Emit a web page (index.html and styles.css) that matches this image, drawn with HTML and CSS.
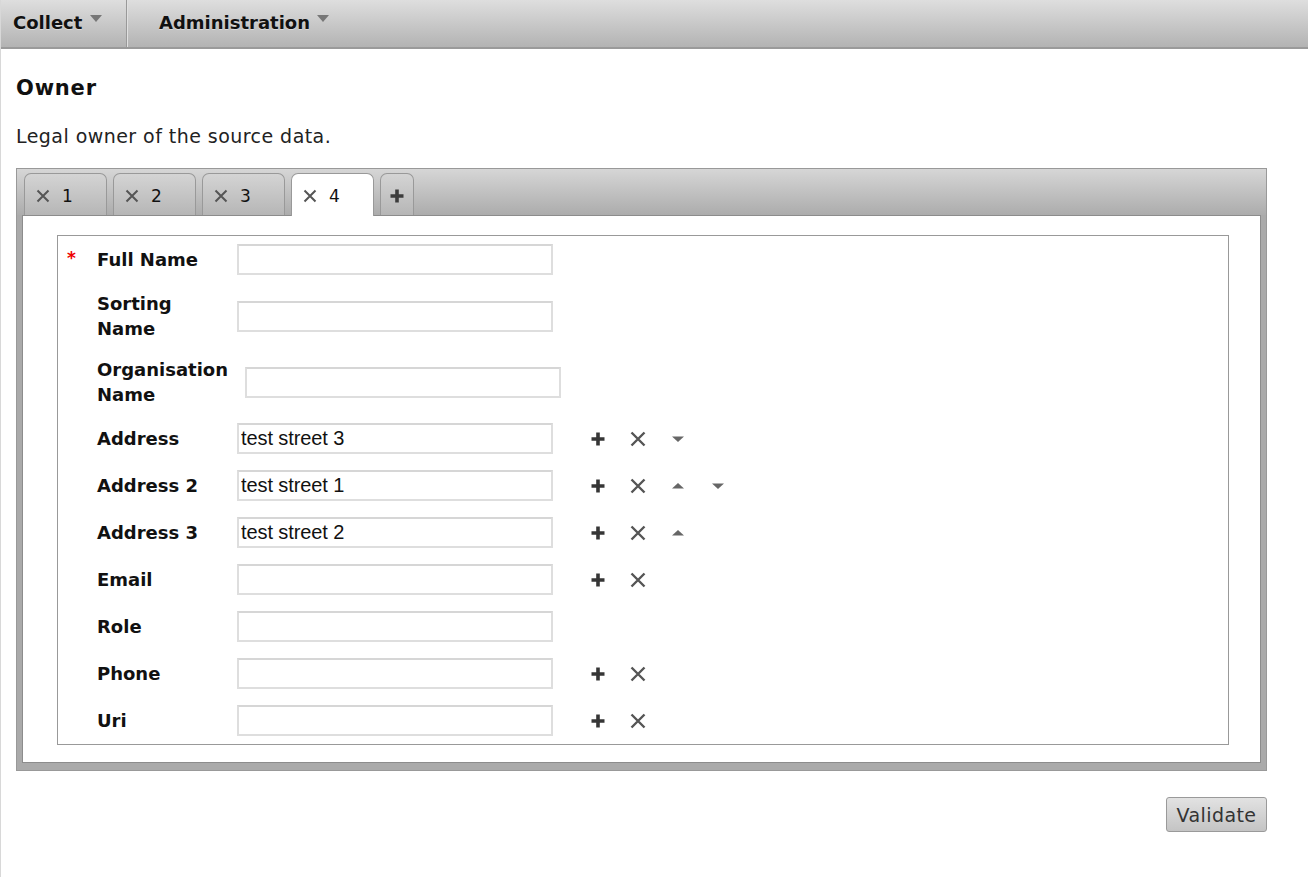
FILE: index.html
```html
<!DOCTYPE html>
<html>
<head>
<meta charset="utf-8">
<link rel="stylesheet" href="styles.css">
</head>
<body>
<div class="topbar">
  <div class="menu first">Collect <span class="caret"></span></div>
  <div class="menu">Administration <span class="caret"></span></div>
</div>
<div class="page">
  <h2 class="title">Owner</h2>
  <p class="desc">Legal owner of the source data.</p>

  <div class="tabpanel">
    <div class="tabs">
      <div class="tab"><svg class="tx" viewBox="0 0 14 14"><path d="M1.5 1.5L12.5 12.5M12.5 1.5L1.5 12.5"/></svg>1</div>
      <div class="tab"><svg class="tx" viewBox="0 0 14 14"><path d="M1.5 1.5L12.5 12.5M12.5 1.5L1.5 12.5"/></svg>2</div>
      <div class="tab"><svg class="tx" viewBox="0 0 14 14"><path d="M1.5 1.5L12.5 12.5M12.5 1.5L1.5 12.5"/></svg>3</div>
      <div class="tab active"><svg class="tx" viewBox="0 0 14 14"><path d="M1.5 1.5L12.5 12.5M12.5 1.5L1.5 12.5"/></svg>4</div>
      <div class="tab add"><svg class="plus" viewBox="0 0 16 16"><path d="M8 1.5V14.5M1.5 8H14.5"/></svg></div>
    </div>
    <div class="content">
      <div class="form">
        <div class="row"><span class="req">*</span><label>Full Name</label><input type="text"></div>
        <div class="row"><label>Sorting Name</label><input type="text"></div>
        <div class="row"><label>Organisation Name</label><input type="text"></div>
        <div class="row"><label>Address</label><input type="text" value="test street 3">
          <div class="acts">
            <svg class="ic plus" viewBox="0 0 16 16"><path d="M8 1.5V14.5M1.5 8H14.5"/></svg>
            <svg class="ic x" viewBox="0 0 16 16"><path d="M1.5 1.5L14.5 14.5M14.5 1.5L1.5 14.5"/></svg>
            <svg class="ic tri" viewBox="0 0 16 16"><path d="M2 5.5H14L8 11Z"/></svg>
          </div>
        </div>
        <div class="row"><label>Address 2</label><input type="text" value="test street 1">
          <div class="acts">
            <svg class="ic plus" viewBox="0 0 16 16"><path d="M8 1.5V14.5M1.5 8H14.5"/></svg>
            <svg class="ic x" viewBox="0 0 16 16"><path d="M1.5 1.5L14.5 14.5M14.5 1.5L1.5 14.5"/></svg>
            <svg class="ic tri" viewBox="0 0 16 16"><path d="M2 10.5H14L8 5Z"/></svg>
            <svg class="ic tri" viewBox="0 0 16 16"><path d="M2 5.5H14L8 11Z"/></svg>
          </div>
        </div>
        <div class="row"><label>Address 3</label><input type="text" value="test street 2">
          <div class="acts">
            <svg class="ic plus" viewBox="0 0 16 16"><path d="M8 1.5V14.5M1.5 8H14.5"/></svg>
            <svg class="ic x" viewBox="0 0 16 16"><path d="M1.5 1.5L14.5 14.5M14.5 1.5L1.5 14.5"/></svg>
            <svg class="ic tri" viewBox="0 0 16 16"><path d="M2 10.5H14L8 5Z"/></svg>
          </div>
        </div>
        <div class="row"><label>Email</label><input type="text">
          <div class="acts">
            <svg class="ic plus" viewBox="0 0 16 16"><path d="M8 1.5V14.5M1.5 8H14.5"/></svg>
            <svg class="ic x" viewBox="0 0 16 16"><path d="M1.5 1.5L14.5 14.5M14.5 1.5L1.5 14.5"/></svg>
          </div>
        </div>
        <div class="row"><label>Role</label><input type="text"></div>
        <div class="row"><label>Phone</label><input type="text">
          <div class="acts">
            <svg class="ic plus" viewBox="0 0 16 16"><path d="M8 1.5V14.5M1.5 8H14.5"/></svg>
            <svg class="ic x" viewBox="0 0 16 16"><path d="M1.5 1.5L14.5 14.5M14.5 1.5L1.5 14.5"/></svg>
          </div>
        </div>
        <div class="row"><label>Uri</label><input type="text">
          <div class="acts">
            <svg class="ic plus" viewBox="0 0 16 16"><path d="M8 1.5V14.5M1.5 8H14.5"/></svg>
            <svg class="ic x" viewBox="0 0 16 16"><path d="M1.5 1.5L14.5 14.5M14.5 1.5L1.5 14.5"/></svg>
          </div>
        </div>
      </div>
    </div>
  </div>
  <div class="footer"><button class="btn">Validate</button></div>
</div>
</body>
</html>
```

FILE: styles.css
```css
html, body {
  margin: 0;
  padding: 0;
  background: #fff;
}
body {
  font-family: "DejaVu Sans", Verdana, sans-serif;
  color: #111;
  border-left: 1px solid #d8d8d8;
  min-height: 877px;
  box-sizing: border-box;
}
.topbar {
  height: 47px;
  display: flex;
  align-items: stretch;
  background: linear-gradient(#dedede, #b3b3b3);
  border-bottom: 2px solid #9a9a9a;
}
.menu {
  font-weight: bold;
  font-size: 18px;
  line-height: 22px;
  padding: 12px 0 0 12px;
  box-sizing: border-box;
  text-shadow: 0 1px 0 rgba(255,255,255,0.4);
}
.menu.first {
  width: 126px;
  border-right: 1px solid #999;
  box-shadow: 1px 0 0 #e0e0e0;
}
.menu + .menu {
  padding-left: 32px;
}
.caret {
  display: inline-block;
  width: 0;
  height: 0;
  border-left: 6px solid transparent;
  border-right: 6px solid transparent;
  border-top: 7px solid #777;
  vertical-align: top;
  margin-top: 3px;
  margin-left: 1px;
}
.page {
  padding: 0 41px 0 15px;
}
.title {
  font-size: 21px;
  letter-spacing: 0.8px;
  font-weight: bold;
  margin: 28px 0 0;
  line-height: 22px;
}
.desc {
  font-size: 19px;
  letter-spacing: 0.45px;
  margin: 26px 0 0;
  line-height: 22px;
  color: #222;
}
.tabpanel {
  margin-top: 21px;
  border: 1px solid #999;
  background: linear-gradient(#d6d6d6 0px, #acacac 46px, #aaaaaa 46px);
  padding: 4px 5px 7px 5px;
}
.tabs {
  display: flex;
  gap: 6px;
  padding-left: 2px;
  position: relative;
  z-index: 1;
}
.tab {
  width: 83px;
  height: 42px;
  box-sizing: border-box;
  border: 1px solid #999;
  border-bottom: none;
  border-radius: 7px 7px 0 0;
  background: linear-gradient(#d4d4d4, #b6b6b6);
  display: flex;
  align-items: center;
  padding: 2px 0 0 11px;
  font-size: 17px;
  color: #111;
}
.tab .tx {
  width: 14px;
  height: 14px;
  margin-right: 12px;
  fill: none;
  stroke: #555;
  stroke-width: 2;
}
.tab.active {
  background: #fff;
  height: 43px;
  margin-bottom: -1px;
}
.tab.add {
  width: 34px;
  padding: 2px 0 0 0;
  justify-content: center;
}
.tab.add .plus {
  width: 16px;
  height: 16px;
  fill: none;
  stroke: #3c3c3c;
  stroke-width: 3.6;
}
.content {
  background: #fff;
  border: 1px solid #8c8c8c;
  padding: 19px 31px 17px 34px;
}
.form {
  border: 1px solid #999;
  padding: 8px 0 8px 0;
  display: flex;
  flex-direction: column;
  gap: 16px;
}
.row {
  display: flex;
  align-items: center;
  position: relative;
  padding-left: 39px;
}
.req {
  position: absolute;
  left: 9px;
  top: 4px;
  color: #e00;
  font-size: 17px;
  font-weight: bold;
}
label {
  font-weight: bold;
  font-size: 18px;
  line-height: 25px;
  width: 123px;
  min-width: min-content;
  margin-right: 17px;
  flex: 0 0 auto;
}
input {
  width: 316px;
  height: 31px;
  box-sizing: border-box;
  border: 2px solid #dedede;
  border-top-color: #d6d6d6;
  padding: 0 2px;
  font-family: "Liberation Sans", Arial, sans-serif;
  font-size: 20px;
  letter-spacing: -0.1px;
  color: #111;
  margin: 0;
  background: #fff;
}
.acts {
  display: flex;
  gap: 24px;
  margin-left: 37px;
}
.ic {
  width: 16px;
  height: 16px;
  display: block;
}
.ic.plus {
  fill: none;
  stroke: #363636;
  stroke-width: 3.6;
}
.ic.x {
  fill: none;
  stroke: #555;
  stroke-width: 2.4;
}
.ic.tri {
  fill: #666;
}
.footer {
  display: flex;
  justify-content: flex-end;
  margin-top: 26px;
}
.btn {
  width: 101px;
  height: 35px;
  border: 1px solid #9a9a9a;
  border-radius: 3px;
  background: linear-gradient(#e2e2e2, #c4c4c4);
  font-family: "DejaVu Sans", Verdana, sans-serif;
  font-size: 19px;
  letter-spacing: 0.4px;
  color: #333;
  padding: 0;
}
```
